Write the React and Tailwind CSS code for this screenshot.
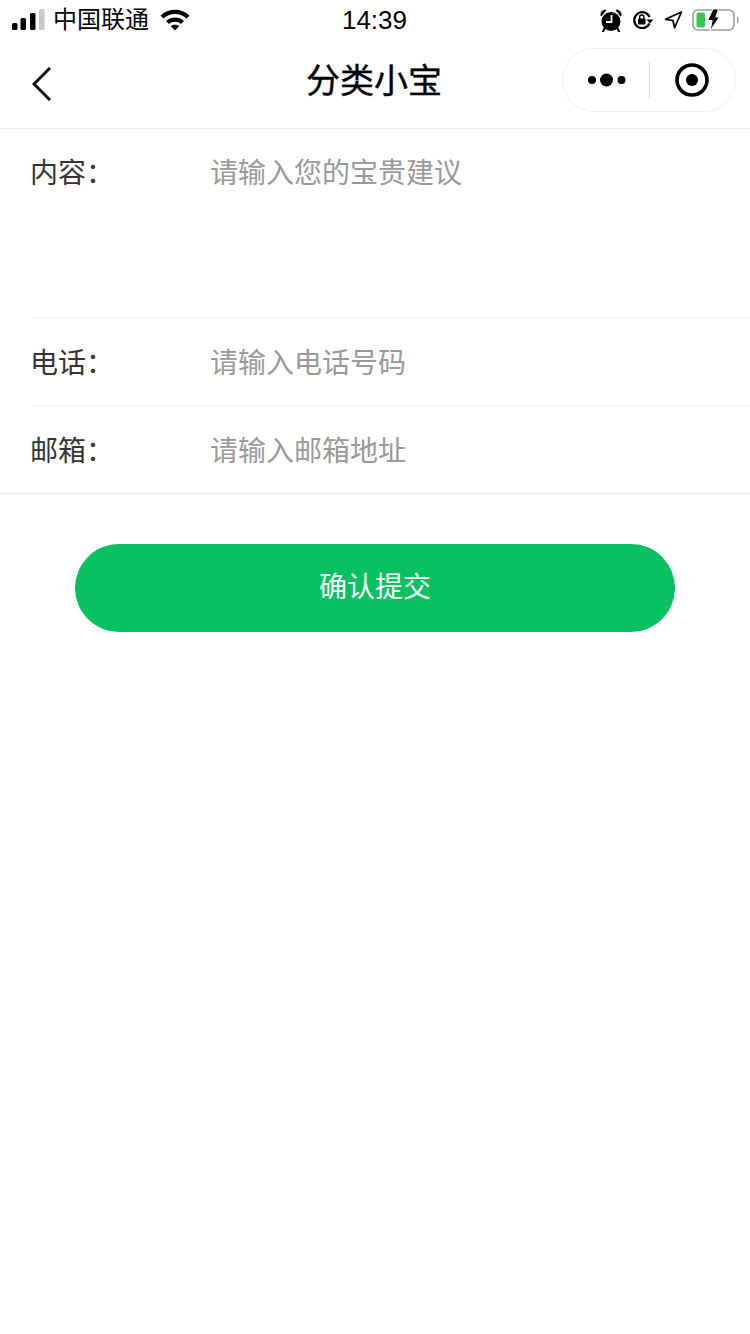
import React from "react";

const fontStack = { fontFamily: '"Liberation Sans", "Noto Sans CJK SC", sans-serif' };

function SignalIcon() {
  return (
    <svg width="34" height="22" viewBox="0 0 34 22" className="block">
      <rect x="0" y="14" width="5.5" height="7" rx="1.5" fill="#000" />
      <rect x="8.5" y="9" width="5.5" height="12" rx="1.5" fill="#000" />
      <rect x="18" y="4" width="5.5" height="17" rx="1.5" fill="#000" />
      <rect x="27" y="0" width="5.5" height="21" rx="1.5" fill="#c9c9c9" />
    </svg>
  );
}

function WifiIcon() {
  return (
    <svg width="30" height="22" viewBox="0 0 30 22" className="block">
      <path d="M0.5 6.5C8.5 -1.2 21.5 -1.2 29.5 6.5L26.6 9.6C20.2 3.6 9.8 3.6 3.4 9.6Z" fill="#000" />
      <path d="M6 12C11 7.4 19 7.4 24 12L21 15.1C17.6 12 12.4 12 9 15.1Z" fill="#000" />
      <path d="M11 17.2C13.2 15.4 16.8 15.4 19 17.2L15 21.6Z" fill="#000" />
    </svg>
  );
}

function AlarmIcon() {
  return (
    <svg width="22" height="23" viewBox="0 0 22 23" className="block">
      <path d="M0.5 6.5C0 2.5 3.5 0 6.5 1L1.5 7.5Z" fill="#000" />
      <path d="M21.5 6.5C22 2.5 18.5 0 15.5 1L20.5 7.5Z" fill="#000" />
      <circle cx="11" cy="12.5" r="9.5" fill="#000" />
      <path d="M4.5 19.5L3 22.5M17.5 19.5L19 22.5" stroke="#000" strokeWidth="2" strokeLinecap="round" />
      <path d="M11.5 6V13H6" fill="none" stroke="#fff" strokeWidth="1.8" />
    </svg>
  );
}

function RotationLockIcon() {
  return (
    <svg width="22" height="18" viewBox="0 0 22 18" className="block">
      <path d="M17.5 12.5A8 8 0 1 1 17.6 6" fill="none" stroke="#000" strokeWidth="2.2" />
      <path d="M14.5 8.5H21.5L18 12.5Z" fill="#000" />
      <rect x="6" y="7.5" width="7.5" height="6" rx="1" fill="#000" />
      <path d="M7.6 8V6.2A2.1 2.1 0 0 1 11.9 6.2V8" fill="none" stroke="#000" strokeWidth="1.4" />
    </svg>
  );
}

function LocationIcon() {
  return (
    <svg width="19" height="18" viewBox="0 0 19 18" className="block">
      <path d="M17.5 1L1.5 8.3L9 9.5L10.5 16.8Z" fill="none" stroke="#000" strokeWidth="1.7" strokeLinejoin="round" />
    </svg>
  );
}

function BatteryIcon() {
  return (
    <svg width="47" height="24" viewBox="0 0 47 24" className="block">
      <rect x="1" y="2" width="41" height="20" rx="5" fill="none" stroke="#9b9b9b" strokeWidth="1.6" />
      <rect x="4.5" y="4.5" width="8.5" height="15" rx="2.5" fill="#34c759" />
      <path d="M45 8.5C46.2 9 46.6 10.3 46.6 12C46.6 13.7 46.2 15 45 15.5Z" fill="#9b9b9b" />
      <path d="M21 1H26.5L23.8 9H27.5L18 23L20.2 12.5H15.5Z" fill="#000" stroke="#fff" strokeWidth="1" />
    </svg>
  );
}

function BackIcon() {
  return (
    <svg width="20" height="34" viewBox="0 0 20 34" className="block">
      <path d="M18 1L2 17L18 33" fill="none" stroke="#111" strokeWidth="3" />
    </svg>
  );
}

function MoreIcon() {
  return (
    <svg width="38" height="14" viewBox="0 0 38 14" className="block">
      <circle cx="4" cy="7" r="4" fill="#000" />
      <circle cx="18.5" cy="7" r="6.5" fill="#000" />
      <circle cx="33.5" cy="7" r="4" fill="#000" />
    </svg>
  );
}

function TargetIcon() {
  return (
    <svg width="36" height="36" viewBox="0 0 36 36" className="block">
      <circle cx="18" cy="18" r="15" fill="none" stroke="#000" strokeWidth="3.6" />
      <circle cx="18" cy="18" r="6" fill="#000" />
    </svg>
  );
}

function StatusBar() {
  return (
    <div className="grid h-10 grid-cols-3 items-center pl-3 pr-[11px]">
      <div className="flex items-center">
        <SignalIcon />
        <span className="ml-[7px] text-[24px] leading-none text-black">中国联通</span>
        <span className="ml-[11px]"><WifiIcon /></span>
      </div>
      <div className="pr-[2px] text-center text-[26px] leading-none text-black">14:39</div>
      <div className="flex items-center justify-end gap-[10px]">
        <AlarmIcon />
        <RotationLockIcon />
        <LocationIcon />
        <div className="-ml-px"><BatteryIcon /></div>
      </div>
    </div>
  );
}

function NavBar() {
  return (
    <div className="grid h-[89px] grid-cols-3 items-center border-b border-[#ececec] px-[14px] pb-[9px]">
      <div className="ml-[18px] mt-[8px]"><BackIcon /></div>
      <h1 className="mt-[2px] whitespace-nowrap pr-[2px] text-center text-[34px] font-normal leading-none text-black [-webkit-text-stroke:0.4px_#000]">分类小宝</h1>
      <div className="flex justify-end">
        <div className="flex h-16 w-[174px] items-center rounded-full border border-[#eeeeee] bg-white">
          <div className="flex flex-1 items-center justify-center"><div className="ml-[3px]"><MoreIcon /></div></div>
          <div className="h-[38px] w-px bg-[#d8d8d8]" />
          <div className="flex flex-1 items-center justify-center"><TargetIcon /></div>
        </div>
      </div>
    </div>
  );
}

function FormRow({ label, placeholder, tall, last }) {
  const borderClass = last ? "" : "border-b border-[#f1f1f1]";
  const sizeClass = tall ? "h-[189px] items-start pt-[24px]" : last ? "h-[87px] items-center pt-[5px]" : "h-[88px] items-center pt-[4px]";
  return (
    <div className={`ml-[32px] flex ${sizeClass} ${borderClass}`}>
      <label className="-ml-[2px] w-[180px] shrink-0 text-[28px] leading-[42px] text-[#353535]">{label}</label>
      {tall ? (
        <textarea
          placeholder={placeholder}
          style={fontStack}
          className="h-[140px] flex-1 resize-none bg-transparent text-[28px] leading-[42px] text-[#353535] outline-none placeholder:text-[#999999]"
        />
      ) : (
        <input
          placeholder={placeholder}
          style={fontStack}
          className="h-[42px] flex-1 bg-transparent text-[28px] leading-[42px] text-[#353535] outline-none placeholder:text-[#999999]"
        />
      )}
    </div>
  );
}

export default function App() {
  return (
    <div className="min-h-[1334px] bg-white" style={fontStack}>
      <StatusBar />
      <NavBar />
      <form className="border-b border-[#e9e9e9]">
        <FormRow label="内容：" placeholder="请输入您的宝贵建议" tall />
        <FormRow label="电话：" placeholder="请输入电话号码" />
        <FormRow label="邮箱：" placeholder="请输入邮箱地址" last />
      </form>
      <div className="px-[75px] pt-[50px]">
        <button className="h-[88px] w-full rounded-full bg-[#07c160] text-[28px] text-white">确认提交</button>
      </div>
    </div>
  );
}
